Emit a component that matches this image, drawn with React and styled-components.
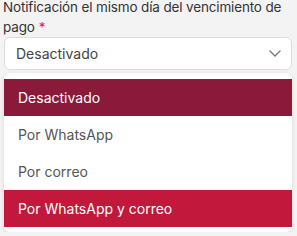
import React from 'react';
import styled, { createGlobalStyle } from 'styled-components';

const GlobalStyle = createGlobalStyle`
  body {
    margin: 0;
    background: #f3f3f3;
    font-family: 'Inter', 'Noto Sans', sans-serif;
  }
`;

const Field = styled.div`
  display: flex;
  flex-direction: column;
  padding: 0 5px 0 4px;
  width: 297px;
  box-sizing: border-box;
`;

const Label = styled.div`
  color: #333;
  font-size: 13.5px;
  line-height: 20px;
  height: 40px;
  margin: -3px 0 0 -1px;
  letter-spacing: -0.15px;
`;

const Required = styled.span`
  color: #e0263b;
  margin-left: 4px;
`;

const SelectBox = styled.div`
  align-items: center;
  background: #fff;
  border: 1px solid #dcdcdc;
  border-radius: 6px;
  box-sizing: border-box;
  color: #444;
  display: flex;
  flex: none;
  font-size: 14px;
  height: 33px;
  justify-content: space-between;
  padding: 0 10px 0 11px;
`;

const Menu = styled.ul`
  background: #fff;
  border-radius: 6px;
  box-shadow: 0 1px 4px rgba(0, 0, 0, 0.12);
  list-style: none;
  margin: 3px 0 0;
  padding: 6px 0 5px;
`;

const Option = styled.li`
  align-items: center;
  background: ${(p) => p.bg || 'transparent'};
  color: ${(p) => (p.bg ? '#fff' : '#555')};
  display: flex;
  font-size: 14px;
  height: 37px;
  padding: 0 14px;
`;

const options = [
  { label: 'Desactivado', bg: '#8b1a3a' },
  { label: 'Por WhatsApp' },
  { label: 'Por correo' },
  { label: 'Por WhatsApp y correo', bg: '#c1183c' },
];

const Chevron = () => (
  <svg width="12" height="7" viewBox="0 0 12 7" fill="none">
    <path d="M1 1l5 5 5-5" stroke="#777" strokeWidth="1.4" strokeLinecap="round" strokeLinejoin="round" />
  </svg>
);

export default function App() {
  return (
    <>
      <GlobalStyle />
      <Field>
        <Label>
          Notificación el mismo día del vencimiento de pago<Required>*</Required>
        </Label>
        <SelectBox>
          Desactivado
          <Chevron />
        </SelectBox>
        <Menu>
          {options.map((o) => (
            <Option key={o.label} bg={o.bg}>
              {o.label}
            </Option>
          ))}
        </Menu>
      </Field>
    </>
  );
}
